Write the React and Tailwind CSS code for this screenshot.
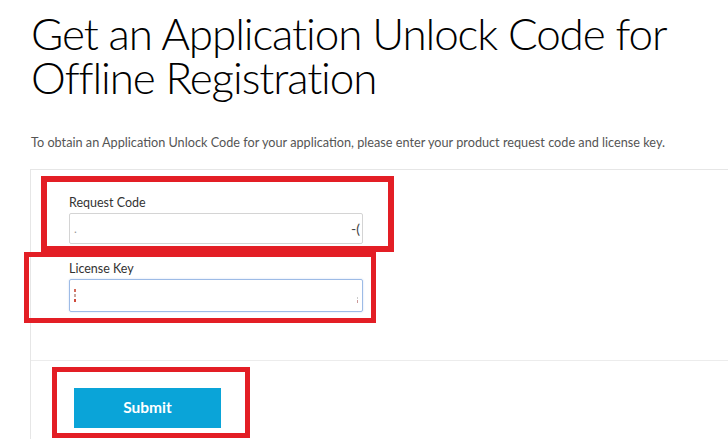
export default function App() {
  return (
    <div className="relative w-[728px] h-[439px] overflow-hidden bg-white" style={{ fontFamily: "Lato, 'Open Sans', sans-serif" }}>
      <h1 className="pl-[31px] pt-[11px] text-[44px] leading-[44px] font-light tracking-[-0.025em] text-black">
        Get an Application Unlock Code for
        <br />
        Offline Registration
      </h1>
      <p className="pl-[31px] mt-[35px] text-[12.7px] leading-[16px] text-[#555]">
        To obtain an Application Unlock Code for your application, please enter your product request code and license key.
      </p>
      <div className="ml-[30px] mt-[19px] border-l border-t border-[#e6e6e6]">
        <div className="pl-[38px] pt-[25px] pb-[48px]">
          <div className="w-[294px]">
            <div className="text-[12.5px] leading-[16px] text-[#333] mb-[2px]">Request Code</div>
            <div className="h-[31px] border border-[#d4d4d4] rounded-[2px] flex items-center justify-between px-[4px] overflow-hidden text-[12px] text-[#666]">
              <span className="text-[#999]">.</span>
              <span className="-mr-[2px] text-[14px] text-[#444]">-(</span>
            </div>
            <div className="mt-[17px] text-[12.5px] leading-[16px] text-[#333] mb-[2px]">License Key</div>
            <div className="h-[33px] border border-[#9dbbe6] rounded-[2px] flex items-center justify-between px-[4px] shadow-[0_0_2px_rgba(100,150,220,0.35)]">
              <span className="flex flex-col gap-[2px]">
                <span className="w-[2px] h-[3px] bg-[#d46a5a]"></span>
                <span className="w-[2px] h-[3px] bg-[#c9a79f]"></span>
                <span className="w-[2px] h-[3px] bg-[#d04a3a]"></span>
              </span>
              <span className="flex flex-col gap-[1px] mt-[8px]">
                <span className="w-[1px] h-[2px] bg-[#ccc]"></span>
                <span className="w-[1px] h-[3px] bg-[#c99]"></span>
              </span>
            </div>
          </div>
        </div>
        <div className="border-t border-[#ececec] pt-[27px] pl-[43px] pb-[20px]">
          <button className="w-[147px] h-[40px] bg-[#0aa4d8] text-white font-bold text-[15.5px]">Submit</button>
        </div>
      </div>
      <div className="absolute left-[41px] top-[176px] w-[353px] h-[76px] border-[6px] border-[#e31e25]"></div>
      <div className="absolute left-[24px] top-[252px] w-[352px] h-[71px] border-[5px] border-[#e31e25]"></div>
      <div className="absolute left-[52px] top-[367px] w-[198px] h-[71px] border-[5px] border-[#e31e25]"></div>
    </div>
  );
}
